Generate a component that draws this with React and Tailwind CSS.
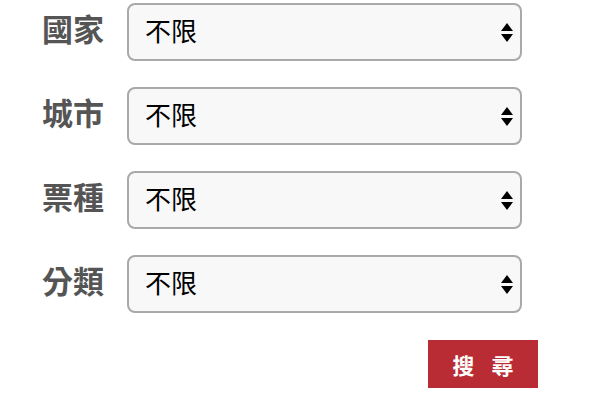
import React from 'react';

const fields = [
  { label: '國家', name: 'country' },
  { label: '城市', name: 'city' },
  { label: '票種', name: 'ticket' },
  { label: '分類', name: 'category' },
];

const font = { fontFamily: '"Noto Sans CJK TC", "Noto Sans", sans-serif' };

const Arrows = () => (
  <svg className="pointer-events-none absolute right-[9px] top-[20px] w-[12px] h-[20px]" viewBox="0 0 12 20">
    <path d="M6 0 L12 8 L0 8 Z" fill="#000" />
    <path d="M0 11 L12 11 L6 19 Z" fill="#000" />
  </svg>
);

export default function App() {
  return (
    <div className="w-[604px] h-[394px] bg-white pt-[3px]" style={font}>
      <div className="flex flex-col gap-[26px]">
        {fields.map((f) => (
          <div key={f.name} className="flex items-center pl-[42px]">
            <label className="w-[85px] text-[31px] font-bold text-[#555555] leading-none -mt-[10px]">
              {f.label}
            </label>
            <div className="relative">
              <select
                name={f.name}
                defaultValue=""
                className="appearance-none block w-[395px] h-[58px] rounded-[8px] border-2 border-[#a9a9a9] bg-[#f8f8f8] pl-[16px] pb-[5px] text-[26px] text-black outline-none"
                style={font}
              >
                <option value="">不限</option>
              </select>
              <Arrows />
            </div>
          </div>
        ))}
      </div>
      <div className="flex justify-end pr-[66px] mt-[27px]">
        <button className="w-[110px] h-[48px] bg-[#b92c33] text-white text-[22px] font-bold tracking-[6px] pl-[6px] leading-none" style={font}>
          搜 尋
        </button>
      </div>
    </div>
  );
}
